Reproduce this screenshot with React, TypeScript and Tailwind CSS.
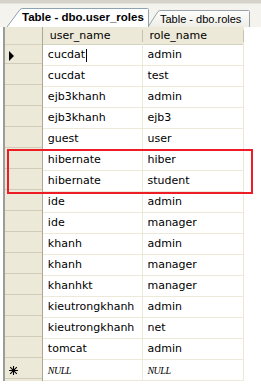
import React from "react";

const rows: [string, string][] = [
    ["cucdat", "admin"],
    ["cucdat", "test"],
    ["ejb3khanh", "admin"],
    ["ejb3khanh", "ejb3"],
    ["guest", "user"],
    ["hibernate", "hiber"],
    ["hibernate", "student"],
    ["ide", "admin"],
    ["ide", "manager"],
    ["khanh", "admin"],
    ["khanh", "manager"],
    ["khanhkt", "manager"],
    ["kieutrongkhanh", "admin"],
    ["kieutrongkhanh", "net"],
    ["tomcat", "admin"],
];

function Arrow() {
    return (
        <svg width="6" height="10" viewBox="0 0 6 10">
            <path d="M0 0 L5 5 L0 10 Z" fill="#000" />
        </svg>
    );
}

function Star() {
    return (
        <svg width="9" height="9" viewBox="0 0 9 9">
            <path
                d="M4.5 0 V9 M0 4.5 H9 M1.2 1.2 L7.8 7.8 M7.8 1.2 L1.2 7.8"
                stroke="#000"
                strokeWidth="1.1"
            />
        </svg>
    );
}

function Selector({ children }: { children?: React.ReactNode }) {
    return (
        <div className="w-[38px] h-full flex items-center pl-[4px] bg-[#ece9d8] border-r border-r-[#aca899] shadow-[inset_0_-2px_0_#ece9d8,inset_0_-3px_0_#d0ccb8]">
            {children}
        </div>
    );
}

export default function App() {
    return (
        <div
            className="relative w-[261px] h-[389px] bg-white overflow-hidden text-black"
            style={{ fontFamily: '"DejaVu Sans", sans-serif' }}
        >
            {/* tab strip */}
            <div className="h-[27px] bg-[#f4f3ee] relative">
                <div className="h-[4px] bg-[#d6d3ca] border-b border-b-[#e4e2da]" />
                <div
                    className="flex items-end h-[23px] pl-[7px] whitespace-nowrap"
                    style={{ fontFamily: '"Liberation Sans", Arial, sans-serif' }}
                >
                    <div className="relative z-10 h-[19px] w-[143px] pl-[15px] flex items-center">
                        <svg
                            className="absolute inset-0"
                            width="143"
                            height="19"
                            viewBox="0 0 143 19"
                        >
                            <path
                                d="M0 19 L13 1.5 Q14 0.5 16 0.5 L140.5 0.5 Q141.5 0.5 141.5 1.5 L141.5 19"
                                fill="#fff"
                                stroke="#8fa2b0"
                            />
                        </svg>
                        <span className="relative text-[11.5px] font-bold leading-none pt-[1px]">
                            Table - dbo.user_roles
                        </span>
                    </div>
                    <div className="relative h-[17px] w-[103px] -ml-[2px] pl-[12px] flex items-center">
                        <svg
                            className="absolute inset-0"
                            width="103"
                            height="17"
                            viewBox="0 0 103 17"
                        >
                            <defs>
                                <linearGradient id="g" x1="0" y1="0" x2="0" y2="1">
                                    <stop offset="0" stopColor="#fefefe" />
                                    <stop offset="1" stopColor="#eeede5" />
                                </linearGradient>
                            </defs>
                            <path
                                d="M0 17 L10 1.5 Q11 0.5 13 0.5 L100.5 0.5 Q101.5 0.5 101.5 1.5 L101.5 17"
                                fill="url(#g)"
                                stroke="#9aa4a8"
                            />
                        </svg>
                        <span className="relative text-[11px] leading-none pt-[1px]">
                            Table - dbo.roles
                        </span>
                    </div>
                </div>
            </div>

            {/* grid */}
            <div className="flex pl-[3px]">
                <div className="border-l-2 border-l-[#9d9d97] w-[241px]">
                    <div className="flex h-[18px] bg-[#ece9d8] text-[11px]">
                        <div className="w-[38px] h-full border-r border-r-[#aca899] shadow-[inset_0_-1px_0_#d6d2c0]" />
                        <div className="w-[100px] h-full flex items-center pl-[7px] shadow-[inset_0_-1px_0_#d6d2c0]">
                            user_name
                        </div>
                        <div className="w-[1px] h-full flex items-center">
                            <div className="w-[1px] h-[12px] bg-[#c7c3b0]" />
                        </div>
                        <div className="w-[100px] h-full flex items-center pl-[6px] shadow-[inset_0_-1px_0_#d6d2c0]">
                            role_name
                        </div>
                        <div className="w-[1px] h-full flex items-center">
                            <div className="w-[1px] h-[12px] bg-[#c7c3b0]" />
                        </div>
                    </div>
                    {rows.map(([u, r], i) => (
                        <div key={i} className="flex h-[21px] text-[11px]">
                            <Selector>{i === 0 ? <Arrow /> : null}</Selector>
                            <div className="w-[101px] h-full flex items-center pl-[5px] pt-[1px] border-r border-b border-[#ece9d8]">
                                {u}
                                {i === 0 && (
                                    <span className="inline-block w-[1px] h-[13px] bg-black ml-[1px]" />
                                )}
                            </div>
                            <div className="w-[101px] h-full flex items-center pl-[4px] pt-[1px] border-r border-b border-[#ece9d8]">
                                {r}
                            </div>
                        </div>
                    ))}
                    <div className="flex h-[21px] text-[10px] italic">
                        <Selector>
                            <Star />
                        </Selector>
                        <div
                            className="w-[101px] h-full flex items-center pl-[5px] border-r border-b border-[#ece9d8] tracking-[-0.5px]"
                            style={{ fontFamily: '"Liberation Serif", serif' }}
                        >
                            NULL
                        </div>
                        <div
                            className="w-[101px] h-full flex items-center pl-[4px] border-r border-b border-[#ece9d8] tracking-[-0.5px]"
                            style={{ fontFamily: '"Liberation Serif", serif' }}
                        >
                            NULL
                        </div>
                    </div>
                </div>
            </div>

            {/* highlight box */}
            <div className="absolute left-[7px] top-[149px] w-[246px] h-[45px] border-2 border-[#ee1c24]" />
        </div>
    );
}
